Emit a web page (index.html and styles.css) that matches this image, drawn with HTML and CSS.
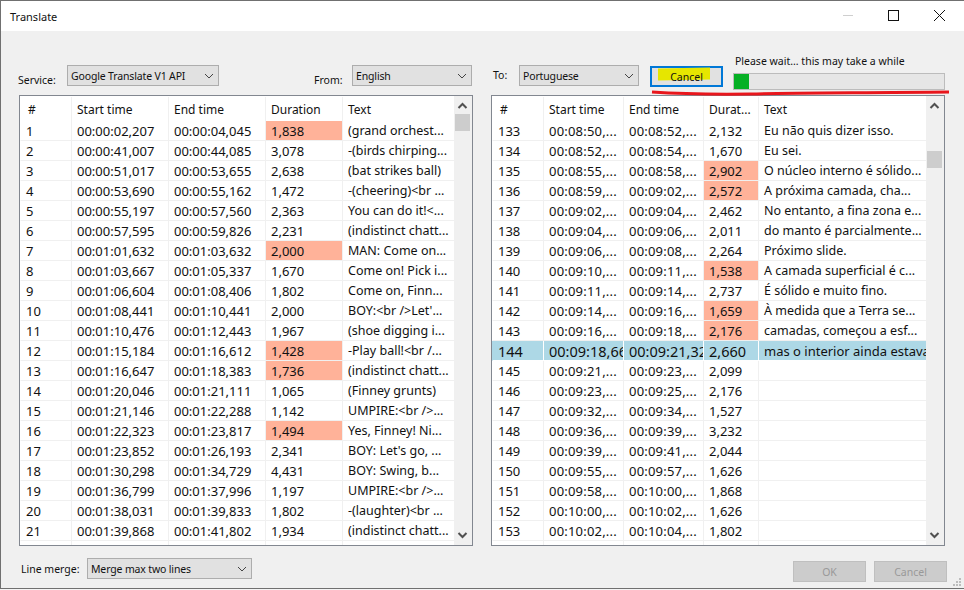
FILE: index.html
```html
<!DOCTYPE html>
<html>
  <head>
    <title>Translate</title>
    <link rel="stylesheet" href="styles.css">
  </head>
  <body>
    <div class="window">
      <div class="titlebar">
        <span class="title">Translate</span>
        <svg class="controls" width="120" height="31" viewBox="0 0 120 31" fill="none">
          <path d="M4 15.5h10" stroke="#cfcfcf"/>
          <rect x="49.5" y="10.5" width="10" height="10" stroke="#111"/>
          <path d="M95 10l11 11M106 10l-11 11" stroke="#111"/>
        </svg>
      </div>
      <div class="content">
        <div class="panes">
          <div class="pane">
            <div class="toolbar">
              <label class="lbl lbl-service">Service:</label>
              <div class="combo combo-service">Google Translate V1 API<svg class="chev" width="10" height="6" viewBox="0 0 10 6"><path d="M1 1l4 4 4-4" fill="none" stroke="#444"/></svg></div>
              <label class="lbl lbl-from">From:</label>
              <div class="combo combo-lang">English<svg class="chev" width="10" height="6" viewBox="0 0 10 6"><path d="M1 1l4 4 4-4" fill="none" stroke="#444"/></svg></div>
            </div>
            <div class="grid-box">
              <div class="grid-clip">
                <table class="grid grid-left">
                  <thead><tr><th>#</th><th>Start time</th><th>End time</th><th>Duration</th><th>Text</th></tr></thead>
                  <tbody>
                    <tr><td>1</td><td>00:00:02,207</td><td>00:00:04,045</td><td class="warn">1,838</td><td>(grand orchest...</td></tr>
                    <tr><td>2</td><td>00:00:41,007</td><td>00:00:44,085</td><td>3,078</td><td>-(birds chirping...</td></tr>
                    <tr><td>3</td><td>00:00:51,017</td><td>00:00:53,655</td><td>2,638</td><td>(bat strikes ball)</td></tr>
                    <tr><td>4</td><td>00:00:53,690</td><td>00:00:55,162</td><td>1,472</td><td>-(cheering)&lt;br ...</td></tr>
                    <tr><td>5</td><td>00:00:55,197</td><td>00:00:57,560</td><td>2,363</td><td>You can do it!&lt;...</td></tr>
                    <tr><td>6</td><td>00:00:57,595</td><td>00:00:59,826</td><td>2,231</td><td>(indistinct chatt...</td></tr>
                    <tr><td>7</td><td>00:01:01,632</td><td>00:01:03,632</td><td class="warn">2,000</td><td>MAN: Come on...</td></tr>
                    <tr><td>8</td><td>00:01:03,667</td><td>00:01:05,337</td><td>1,670</td><td>Come on! Pick i...</td></tr>
                    <tr><td>9</td><td>00:01:06,604</td><td>00:01:08,406</td><td>1,802</td><td>Come on, Finn...</td></tr>
                    <tr><td>10</td><td>00:01:08,441</td><td>00:01:10,441</td><td>2,000</td><td>BOY:&lt;br /&gt;Let'...</td></tr>
                    <tr><td>11</td><td>00:01:10,476</td><td>00:01:12,443</td><td>1,967</td><td>(shoe digging i...</td></tr>
                    <tr><td>12</td><td>00:01:15,184</td><td>00:01:16,612</td><td class="warn">1,428</td><td>-Play ball!&lt;br /...</td></tr>
                    <tr><td>13</td><td>00:01:16,647</td><td>00:01:18,383</td><td class="warn">1,736</td><td>(indistinct chatt...</td></tr>
                    <tr><td>14</td><td>00:01:20,046</td><td>00:01:21,111</td><td>1,065</td><td>(Finney grunts)</td></tr>
                    <tr><td>15</td><td>00:01:21,146</td><td>00:01:22,288</td><td>1,142</td><td>UMPIRE:&lt;br /&gt;...</td></tr>
                    <tr><td>16</td><td>00:01:22,323</td><td>00:01:23,817</td><td class="warn">1,494</td><td>Yes, Finney! Ni...</td></tr>
                    <tr><td>17</td><td>00:01:23,852</td><td>00:01:26,193</td><td>2,341</td><td>BOY: Let's go, ...</td></tr>
                    <tr><td>18</td><td>00:01:30,298</td><td>00:01:34,729</td><td>4,431</td><td>BOY: Swing, b...</td></tr>
                    <tr><td>19</td><td>00:01:36,799</td><td>00:01:37,996</td><td>1,197</td><td>UMPIRE:&lt;br /&gt;...</td></tr>
                    <tr><td>20</td><td>00:01:38,031</td><td>00:01:39,833</td><td>1,802</td><td>-(laughter)&lt;br ...</td></tr>
                    <tr><td>21</td><td>00:01:39,868</td><td>00:01:41,802</td><td>1,934</td><td>(indistinct chatt...</td></tr>
                    <tr><td></td><td></td><td></td><td></td><td></td></tr>
                  </tbody>
                </table>
              </div>
              <div class="scrollbar">
                <svg class="arrow" width="15" height="17" viewBox="0 0 15 17"><path d="M3.5 12l4-4 4 4" fill="none" stroke="#505050" stroke-width="2"/></svg>
                <div class="track"><div class="thumb thumb-left"></div></div>
                <svg class="arrow" width="15" height="17" viewBox="0 0 15 17"><path d="M3.5 5l4 4 4-4" fill="none" stroke="#505050" stroke-width="2"/></svg>
              </div>
            </div>
          </div>
          <div class="pane">
            <div class="toolbar">
              <label class="lbl lbl-to">To:</label>
              <div class="combo combo-lang">Portuguese<svg class="chev" width="10" height="6" viewBox="0 0 10 6"><path d="M1 1l4 4 4-4" fill="none" stroke="#444"/></svg></div>
              <button class="btn btn-cancel"><span class="marker"></span><span class="btn-text">Cancel</span></button>
              <div class="progress-wrap">
                <div class="progress-label">Please wait... this may take a while</div>
                <div class="progress"><div class="progress-fill" style="width: 15px"></div></div>
              </div>
              <svg class="red-line" width="300" height="10" viewBox="0 0 300 10"><path d="M1 4C30 6 60 6.500 100 6C130 5 190 5 298 4" fill="none" stroke="#e8161c" stroke-width="3"/></svg>
            </div>
            <div class="grid-box">
              <div class="grid-clip">
                <table class="grid grid-right">
                  <thead><tr><th>#</th><th>Start time</th><th>End time</th><th>Durat...</th><th>Text</th></tr></thead>
                  <tbody>
                    <tr><td>133</td><td>00:08:50,...</td><td>00:08:52,...</td><td>2,132</td><td>Eu não quis dizer isso.</td></tr>
                    <tr><td>134</td><td>00:08:52,...</td><td>00:08:54,...</td><td>1,670</td><td>Eu sei.</td></tr>
                    <tr><td>135</td><td>00:08:55,...</td><td>00:08:58,...</td><td class="warn">2,902</td><td>O núcleo interno é sólido...</td></tr>
                    <tr><td>136</td><td>00:08:59,...</td><td>00:09:02,...</td><td class="warn">2,572</td><td>A próxima camada, cha...</td></tr>
                    <tr><td>137</td><td>00:09:02,...</td><td>00:09:04,...</td><td>2,462</td><td>No entanto, a fina zona e...</td></tr>
                    <tr><td>138</td><td>00:09:04,...</td><td>00:09:06,...</td><td>2,011</td><td>do manto é parcialmente...</td></tr>
                    <tr><td>139</td><td>00:09:06,...</td><td>00:09:08,...</td><td>2,264</td><td>Próximo slide.</td></tr>
                    <tr><td>140</td><td>00:09:10,...</td><td>00:09:11,...</td><td class="warn">1,538</td><td>A camada superficial é c...</td></tr>
                    <tr><td>141</td><td>00:09:11,...</td><td>00:09:14,...</td><td>2,737</td><td>É sólido e muito fino.</td></tr>
                    <tr><td>142</td><td>00:09:14,...</td><td>00:09:16,...</td><td class="warn">1,659</td><td>À medida que a Terra se...</td></tr>
                    <tr><td>143</td><td>00:09:16,...</td><td>00:09:18,...</td><td class="warn">2,176</td><td>camadas, começou a esf...</td></tr>
                    <tr class="selected"><td>144</td><td>00:09:18,660</td><td>00:09:21,320</td><td>2,660</td><td>mas o interior ainda estava quente</td></tr>
                    <tr><td>145</td><td>00:09:21,...</td><td>00:09:23,...</td><td>2,099</td><td></td></tr>
                    <tr><td>146</td><td>00:09:23,...</td><td>00:09:25,...</td><td>2,176</td><td></td></tr>
                    <tr><td>147</td><td>00:09:32,...</td><td>00:09:34,...</td><td>1,527</td><td></td></tr>
                    <tr><td>148</td><td>00:09:36,...</td><td>00:09:39,...</td><td>3,232</td><td></td></tr>
                    <tr><td>149</td><td>00:09:39,...</td><td>00:09:41,...</td><td>2,044</td><td></td></tr>
                    <tr><td>150</td><td>00:09:55,...</td><td>00:09:57,...</td><td>1,626</td><td></td></tr>
                    <tr><td>151</td><td>00:09:58,...</td><td>00:10:00,...</td><td>1,868</td><td></td></tr>
                    <tr><td>152</td><td>00:10:00,...</td><td>00:10:02,...</td><td>1,626</td><td></td></tr>
                    <tr><td>153</td><td>00:10:02,...</td><td>00:10:04,...</td><td>1,802</td><td></td></tr>
                    <tr><td></td><td></td><td></td><td></td><td></td></tr>
                  </tbody>
                </table>
              </div>
              <div class="scrollbar">
                <svg class="arrow" width="15" height="17" viewBox="0 0 15 17"><path d="M3.5 12l4-4 4 4" fill="none" stroke="#505050" stroke-width="2"/></svg>
                <div class="track"><div class="thumb thumb-right"></div></div>
                <svg class="arrow" width="15" height="17" viewBox="0 0 15 17"><path d="M3.5 5l4 4 4-4" fill="none" stroke="#505050" stroke-width="2"/></svg>
              </div>
            </div>
          </div>
        </div>
        <div class="footer">
          <label class="lbl lbl-merge">Line merge:</label>
          <div class="combo combo-merge">Merge max two lines<svg class="chev" width="10" height="6" viewBox="0 0 10 6"><path d="M1 1l4 4 4-4" fill="none" stroke="#444"/></svg></div>
          <div class="footer-buttons">
            <button class="btn btn-off">OK</button>
            <button class="btn btn-off">Cancel</button>
          </div>
        </div>
        <svg class="grip" width="11" height="11" viewBox="0 0 11 11"><path d="M8 1h2v2H8zM5 4h2v2H5zM8 4h2v2H8zM2 7h2v2H2zM5 7h2v2H5zM8 7h2v2H8z" fill="#bdbdbd"/></svg>
      </div>
    </div>
  </body>
</html>
```

FILE: styles.css
```css
/* Dialog window */
* { box-sizing: border-box; }
body { margin: 0; font: 11px "Noto Sans", Arial, sans-serif; color: #111; background: #f4f4f4; }
.window { width: 964px; height: 589px; border: 1px solid #707070; border-right: 0; display: flex; flex-direction: column; overflow: hidden; }

.titlebar { height: 30px; background: #fff; display: flex; align-items: center; justify-content: space-between; padding-left: 9px; flex: none; }
.controls { display: block; margin-right: 5px; margin-top: -1px; }

.content { flex: 1; background: #f0f0f0; padding-left: 18px; position: relative; display: flex; flex-direction: column; }
.panes { display: flex; gap: 18px; }
.pane { width: 454px; }

/* Top row */
.toolbar { height: 64px; display: flex; align-items: flex-start; padding-top: 34px; position: relative; }
.lbl { font-size: 10.5px; line-height: 16px; white-space: nowrap; }
.lbl-service { margin: 7px 0 0 -1px; width: 49px; }
.lbl-from { margin: 7px 0 0 95px; width: 38px; }
.lbl-to { margin: 2px 0 0 2px; width: 26px; }
.lbl-merge { margin: 3px 0 0 2px; width: 66px; }

.combo { height: 21px; background: #e1e1e1; border: 1px solid #adadad; display: flex; align-items: center; justify-content: space-between; padding: 0 4px 0 3px; font-size: 10.5px; letter-spacing: -.15px; white-space: nowrap; flex: none; }
.combo-service { width: 152px; }
.combo-lang { width: 120px; }
.combo-merge { width: 165px; }

.btn { font: 10.5px "Noto Sans", Arial, sans-serif; background: #e1e1e1; border: 1px solid #adadad; padding: 0; height: 21px; width: 73px; color: #111; }
.btn-cancel { margin: 1px 0 0 11px; border: 2px solid #0078d7; position: relative; }
.btn-text { position: relative; }
.marker { position: absolute; left: 6px; top: 0; width: 52px; height: 12px; background: #e6e600; transform: skewY(-1deg); }
.btn-off { background: #cccccc; border-color: #bfbfbf; color: #999; }

.progress-wrap { margin: -10px 0 0 10px; width: 212px; }
.progress-label { font-size: 10.5px; padding-left: 2px; height: 13px; margin-bottom: 5px; white-space: nowrap; line-height: 13px; }
.progress { height: 17px; background: #e6e6e6; border: 1px solid #bcbcbc; }
.progress-fill { height: 100%; background: #06b025; }
.red-line { position: absolute; left: 160px; top: 57px; }

/* Subtitle grids */
.grid-box { width: 454px; height: 451px; background: #fff; border: 1px solid #828790; display: flex; }
.grid-clip { width: 434px; overflow: hidden; padding-top: 1px; flex: none; }
.grid { border-collapse: separate; border-spacing: 0; table-layout: fixed; width: 434px; }
.grid-left { --c1: 51px; --c2: 97px; --c3: 97px; --c4: 77px; }
.grid-right { --c1: 51px; --c2: 80px; --c3: 80px; --c4: 55px; }
.grid th:nth-child(1), .grid td:nth-child(1) { width: var(--c1); }
.grid th:nth-child(2), .grid td:nth-child(2) { width: var(--c2); }
.grid th:nth-child(3), .grid td:nth-child(3) { width: var(--c3); }
.grid th:nth-child(4), .grid td:nth-child(4) { width: var(--c4); }
.grid th { height: 24px; font-weight: normal; text-align: left; padding: 0 0 0 5px; border-left: 1px solid #f0f0f0; font-size: 12px; white-space: nowrap; overflow: hidden; }
.grid th:first-child { border-left-color: #fff; padding-left: 7px; }
.grid td { height: 20px; padding: 1px 0 0 5px; border-left: 1px solid #f0f0f0; border-bottom: 1px solid #f0f0f0; white-space: nowrap; overflow: hidden; font-size: 13px; line-height: 18px; }
.grid td:first-child { border-left-color: #fff; }
.grid td:last-child { font-size: 12.5px; }
.grid-right td:nth-child(2), .grid-right td:nth-child(3) { letter-spacing: .2px; }
.grid td.warn { background: #ffb299; }
.grid tr.selected td { background: #add8e6; font-size: 14.5px; letter-spacing: 0; border-left-color: #fff; border-bottom-color: #fff; }
.grid tr.selected td:first-child { border-left-color: #add8e6; }
.grid tr.selected td:last-child { font-size: 13px; }

.scrollbar { width: 18px; padding-left: 1px; background: #f0f0f0; display: flex; flex-direction: column; }
.arrow { display: block; flex: none; }
.track { flex: 1; position: relative; }
.thumb { position: absolute; left: 0; width: 15px; height: 17px; background: #cdcdcd; }
.thumb-left { top: 1px; }
.thumb-right { top: 38px; }

/* Bottom row */
.footer { display: flex; align-items: flex-start; padding-top: 12px; }
.footer-buttons { margin-left: auto; margin-right: 17px; margin-top: 3px; display: flex; gap: 8px; }
.grip { position: absolute; right: 2px; bottom: 0; }
```
